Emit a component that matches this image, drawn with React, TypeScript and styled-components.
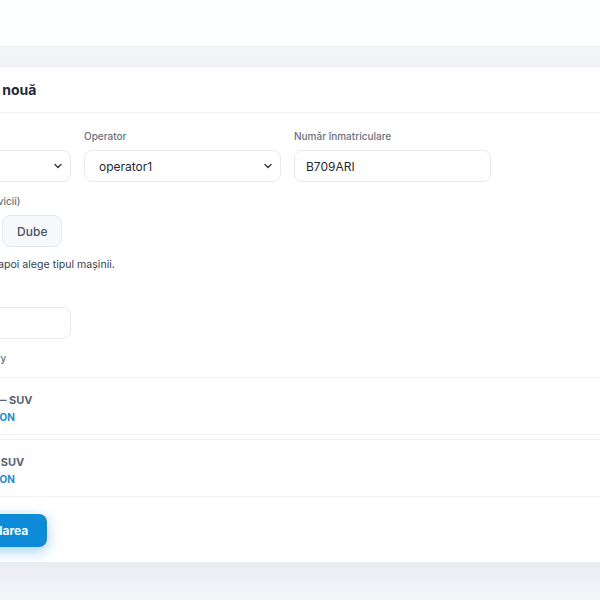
import React from "react";
import styled, { createGlobalStyle } from "styled-components";

const GlobalStyle = createGlobalStyle`
  html, body { margin: 0; padding: 0; }
  body {
    background: #f3f5f9;
    font-family: Inter, "Noto Sans", "Liberation Sans", sans-serif;
    overflow: hidden;
    width: 600px;
    height: 600px;
  }
  * { box-sizing: border-box; }
`;

const TopBar = styled.header`
  height: 47px;
  background: #fdfeff;
  border-bottom: 1px solid #eef1f6;
`;

const Main = styled.main`
  padding-top: 19px;
  margin-left: -143px;
  width: 900px;
`;

const Card = styled.section`
  background: #ffffff;
  border: 1px solid #eceff4;
  border-radius: 12px;
  box-shadow: 0 10px 28px rgba(30, 41, 59, 0.06);
`;

const CardHeader = styled.div`
  height: 46px;
  display: flex;
  align-items: center;
  padding: 0 16px 0 5px;
  border-bottom: 1px solid #eef1f5;
`;

const Title = styled.h2`
  margin: 0;
  font-size: 14px;
  font-weight: 700;
  color: #1f2937;
`;

const CardBody = styled.div`
  padding: 16px 16px 15px;
  display: flex;
  flex-direction: column;
`;

const FieldsGrid = styled.div`
  display: grid;
  grid-template-columns: repeat(3, 197px);
  column-gap: 13px;
`;

const Field = styled.div<{ $mt?: number }>`
  display: flex;
  flex-direction: column;
  gap: 7px;
  margin-top: ${(p) => p.$mt ?? 0}px;
`;

const Label = styled.label<{ $mt?: number }>`
  display: block;
  font-size: 10px;
  line-height: 14px;
  font-weight: 500;
  color: #6b7280;
  margin-top: ${(p) => p.$mt ?? 0}px;
`;

const SelectBox = styled.div`
  height: 32px;
  border: 1px solid #e7eaf0;
  border-radius: 8px;
  background: #ffffff;
  display: flex;
  align-items: center;
  justify-content: space-between;
  padding: 0 6px 0 14px;
  font-size: 12px;
  color: #1f2937;
`;

const InputBox = styled.div<{ $w?: number }>`
  height: 32px;
  width: ${(p) => (p.$w ? `${p.$w}px` : "auto")};
  border: 1px solid #e7eaf0;
  border-radius: 8px;
  background: #ffffff;
  display: flex;
  align-items: center;
  padding: 0 11px;
  font-size: 12px;
  color: #1f2937;
`;

const Segments = styled.div`
  display: flex;
  gap: 8px;
`;

const Segment = styled.button`
  height: 32px;
  padding: 0 14px;
  border: 1px solid #e3e7ee;
  border-radius: 8px;
  background: #f6f8fb;
  font-family: inherit;
  font-size: 12px;
  font-weight: 500;
  color: #4b5563;
`;

const Help = styled.p`
  margin: 11px 0 0;
  font-size: 10.6px;
  line-height: 14px;
  color: #374151;
`;

const List = styled.div`
  margin-top: 12px;
  display: flex;
  flex-direction: column;
  gap: 4px;
`;

const Item = styled.div`
  border: 1px solid #eef0f4;
  border-radius: 8px;
  padding: 13px 16px 9px;
  display: flex;
  flex-direction: column;
`;

const ItemTitle = styled.div`
  font-size: 11px;
  line-height: 18px;
  font-weight: 700;
  color: #5b6472;
`;

const ItemStatus = styled.div`
  font-size: 10px;
  line-height: 16px;
  font-weight: 700;
  color: #1b8ad3;
  text-transform: uppercase;
`;

const Actions = styled.div`
  margin-top: 17px;
  display: flex;
`;

const PrimaryButton = styled.button`
  height: 33px;
  padding: 0 19px 0 23px;
  border: none;
  border-radius: 8px;
  background: #0e8bd8;
  color: #ffffff;
  font-family: inherit;
  font-size: 12px;
  font-weight: 700;
  box-shadow: 0 4px 14px rgba(14, 139, 216, 0.4);
`;

const Chevron = () => (
  <svg width="12" height="12" viewBox="0 0 24 24" fill="none" stroke="#374151" strokeWidth="3" strokeLinecap="round" strokeLinejoin="round">
    <path d="m6 9 6 6 6-6" />
  </svg>
);

const items = [
  { title: "Curățare complexă — SUV", status: "Status: Confirmation" },
  { title: "Curățare normală — SUV", status: "Status: Confirmation" },
];

export default function App() {
  return (
    <>
      <GlobalStyle />
      <TopBar />
      <Main>
        <Card>
          <CardHeader>
            <Title>Adaugă programare nouă</Title>
          </CardHeader>
          <CardBody>
            <FieldsGrid>
              <Field>
                <Label>Locație</Label>
                <SelectBox>
                  <span>Stația 1</span>
                  <Chevron />
                </SelectBox>
              </Field>
              <Field>
                <Label>Operator</Label>
                <SelectBox>
                  <span>operator1</span>
                  <Chevron />
                </SelectBox>
              </Field>
              <Field>
                <Label>Număr înmatriculare</Label>
                <InputBox>B709ARI</InputBox>
              </Field>
            </FieldsGrid>

            <Field $mt={12}>
              <Label>Tipul de autovehicule (servicii)</Label>
              <Segments>
                <Segment>Auto</Segment>
                <Segment>SUV</Segment>
                <Segment>Dube</Segment>
              </Segments>
            </Field>

            <Help>Selectează serviciile, iar apoi alege tipul mașinii.</Help>

            <Field $mt={14}>
              <Label>Preț</Label>
              <InputBox $w={197}></InputBox>
            </Field>

            <Label $mt={12}>Servicii selectate: summary</Label>

            <List>
              {items.map((it) => (
                <Item key={it.title}>
                  <ItemTitle>{it.title}</ItemTitle>
                  <ItemStatus>{it.status}</ItemStatus>
                </Item>
              ))}
            </List>

            <Actions>
              <PrimaryButton>Programează spălarea</PrimaryButton>
            </Actions>
          </CardBody>
        </Card>
      </Main>
    </>
  );
}
